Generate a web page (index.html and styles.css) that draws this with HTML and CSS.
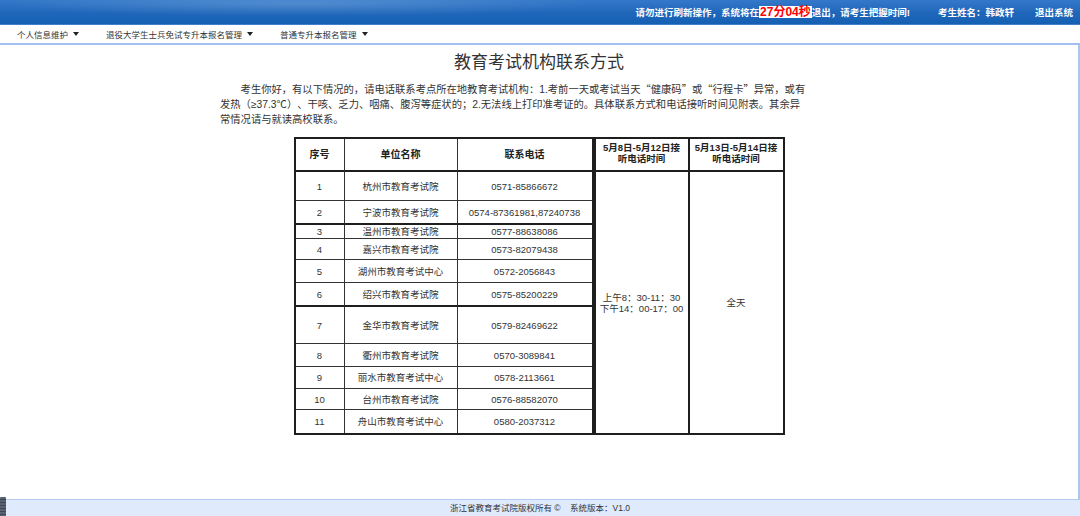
FILE: index.html
```html
<!DOCTYPE html>
<html lang="zh-CN">
<head>
<meta charset="utf-8">
<title>教育考试机构联系方式</title>
<link rel="stylesheet" href="styles.css">
</head>
<body>
<header class="topbar">
  <div class="notice">请勿进行刷新操作，系统将在<span class="timer">27分04秒</span>退出，请考生把握时间!</div>
  <div class="user">考生姓名：韩政轩</div>
  <div class="logout">退出系统</div>
</header>
<nav class="menu">
  <span class="menu-item">个人信息维护<i class="caret"></i></span>
  <span class="menu-item">退役大学生士兵免试专升本报名管理<i class="caret"></i></span>
  <span class="menu-item">普通专升本报名管理<i class="caret"></i></span>
</nav>
<main class="main">
  <h1 class="title">教育考试机构联系方式</h1>
  <p class="intro">考生你好，有以下情况的，请电话联系考点所在地教育考试机构：1.考前一天或考试当天<span class="q">“健康码”</span>或<span class="q">“行程卡”</span>异常，或有发热（≥37.3℃）、干咳、乏力、咽痛、腹泻等症状的；2.无法线上打印准考证的。具体联系方式和电话接听时间见附表。其余异常情况请与就读高校联系。</p>
  <div class="tables">
    <table class="t-left">
      <colgroup><col class="c1"><col class="c2"><col class="c3"></colgroup>
      <tr class="hd"><th>序号</th><th>单位名称</th><th>联系电话</th></tr>
      <tr class="r1"><td>1</td><td>杭州市教育考试院</td><td>0571-85866672</td></tr>
      <tr class="r2 thick"><td>2</td><td>宁波市教育考试院</td><td>0574-87361981,87240738</td></tr>
      <tr class="r3"><td>3</td><td>温州市教育考试院</td><td>0577-88638086</td></tr>
      <tr class="r4"><td>4</td><td>嘉兴市教育考试院</td><td>0573-82079438</td></tr>
      <tr class="r5"><td>5</td><td>湖州市教育考试中心</td><td>0572-2056843</td></tr>
      <tr class="r6 thick"><td>6</td><td>绍兴市教育考试院</td><td>0575-85200229</td></tr>
      <tr class="r7"><td>7</td><td>金华市教育考试院</td><td>0579-82469622</td></tr>
      <tr class="r8"><td>8</td><td>衢州市教育考试院</td><td>0570-3089841</td></tr>
      <tr class="r9"><td>9</td><td>丽水市教育考试中心</td><td>0578-2113661</td></tr>
      <tr class="r10"><td>10</td><td>台州市教育考试院</td><td>0576-88582070</td></tr>
      <tr class="r11 last"><td>11</td><td>舟山市教育考试中心</td><td>0580-2037312</td></tr>
    </table>
    <table class="t-right">
      <colgroup><col class="c4"><col class="c5"></colgroup>
      <tr class="hd"><th>5月8日-5月12日接<br>听电话时间</th><th>5月13日-5月14日接<br>听电话时间</th></tr>
      <tr class="body"><td>上午8：30-11：30<br>下午14：00-17：00</td><td>全天</td></tr>
    </table>
  </div>
</main>
<footer class="footer">浙江省教育考试院版权所有 ©&nbsp;&nbsp;&nbsp; 系统版本：V1.0</footer>
<div class="handle"></div>
</body>
</html>
```
FILE: styles.css
```css
html, body {
  margin: 0;
  padding: 0;
}
body {
  width: 1080px;
  height: 516px;
  overflow: hidden;
  position: relative;
  font-family: "Liberation Sans", "Noto Sans CJK SC", sans-serif;
  color: #333;
  background: #fff;
}

/* top bar */
.topbar {
  height: 25px;
  box-sizing: border-box;
  display: flex;
  justify-content: flex-end;
  align-items: center;
  padding-right: 7px;
  color: #fff;
  font-weight: bold;
  font-size: 9.5px;
  background:
    radial-gradient(ellipse 420px 18px at 300px 4px, rgba(255,255,255,0.16), rgba(255,255,255,0) 70%),
    linear-gradient(180deg, #3479c9 0%, #1f66ba 55%, #1560b3 100%);
  border-bottom: 1px solid #3f7fcc;
}
.notice { margin-right: 28px; }
.user { margin-right: 21px; }
.timer {
  display: inline-block;
  background: #fff;
  color: #f00;
  font-size: 12px;
  line-height: 12px;
  padding: 0 1px;
}

/* menu */
.menu {
  height: 18px;
  display: flex;
  align-items: center;
  gap: 27px;
  padding-left: 17px;
  font-size: 8.5px;
  color: #333;
  border-bottom: 2px solid #a1c0ef;
}
.menu-item { display: inline-flex; align-items: center; }
.caret {
  display: inline-block;
  margin-left: 5px;
  width: 0;
  height: 0;
  border-left: 3px solid transparent;
  border-right: 3px solid transparent;
  border-top: 4px solid #222;
}

/* main content */
.main {
  height: 454px;
  box-sizing: border-box;
  border-right: 2px solid #a9c6f0;
  padding-top: 6px;
  overflow: hidden;
}
.title {
  margin: 0;
  text-align: center;
  font-size: 17px;
  font-weight: normal;
  line-height: 24px;
  color: #333;
}
.intro {
  margin: 6px 0 0 220px;
  width: 588px;
  font-size: 10.3px;
  line-height: 15px;
  text-indent: 2em;
  color: #333;
  text-spacing-trim: space-all;
}
.q {
  font-family: "Noto Sans CJK SC", sans-serif;
  font-feature-settings: "fwid" 1;
}
.tables {
  display: flex;
  justify-content: center;
  margin-top: 10px;
}

table {
  border-collapse: separate;
  border-spacing: 0;
  table-layout: fixed;
  border: 2px solid #1e1e1e;
  font-size: 9.5px;
  color: #333;
}
th, td {
  padding: 0;
  text-align: center;
  vertical-align: middle;
  line-height: 11px;
  border-right: 1px solid #333;
  border-bottom: 1px solid #333;
  box-sizing: border-box;
}
th:last-child, td:last-child { border-right: none; }
th { font-weight: bold; color: #222; border-bottom: 2px solid #1e1e1e; }

.t-left { width: 300px; }
.c1 { width: 49px; }
.c2 { width: 113px; }
.c3 { width: 134px; }
.t-left th { font-size: 10px; }

.hd { height: 33px; }
.r1 { height: 29px; }
.r2 { height: 24px; }
.r3 { height: 14px; }
.r4 { height: 21px; }
.r5 { height: 23px; }
.r6 { height: 24px; }
.r7 { height: 37px; }
.r8 { height: 23px; }
.r9 { height: 22px; }
.r10 { height: 21px; }
.r11 { height: 23px; }
.thick td { border-bottom: 2px solid #1e1e1e; }
.last td { border-bottom: none; }

.t-right { width: 191px; }
.c4 { width: 94px; }
.c5 { width: 93px; }
.t-right th, .t-right td { border-right-width: 2px; border-right-color: #1e1e1e; }
.t-right th:last-child, .t-right td:last-child { border-right: none; }
.t-right th { vertical-align: middle; padding-bottom: 4px; }
.t-right .body { height: 261px; }
.t-right .body td { border-bottom: none; }

/* footer */
.footer {
  height: 17px;
  box-sizing: border-box;
  border-top: 1px solid #b3cbf0;
  background: #dfeafd;
  text-align: center;
  font-size: 8.5px;
  line-height: 16px;
  color: #333;
}
.handle {
  position: absolute;
  left: 0;
  bottom: 0;
  width: 6px;
  height: 19px;
  background: repeating-linear-gradient(180deg, #5a6272 0 2px, #3f4656 2px 3px);
  border-radius: 1px 1px 0 0;
}
```
